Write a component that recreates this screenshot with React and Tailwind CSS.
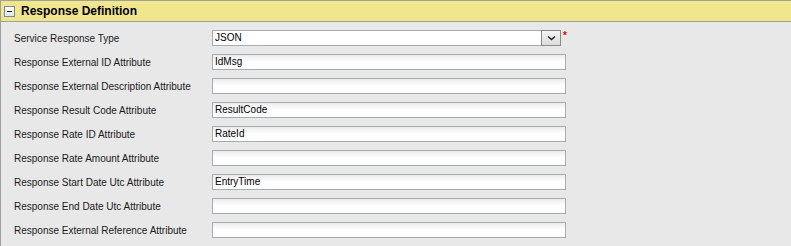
import React from "react";

const fields = [
  { label: "Response External ID Attribute", value: "IdMsg" },
  { label: "Response External Description Attribute", value: "" },
  { label: "Response Result Code Attribute", value: "ResultCode" },
  { label: "Response Rate ID Attribute", value: "RateId" },
  { label: "Response Rate Amount Attribute", value: "" },
  { label: "Response Start Date Utc Attribute", value: "EntryTime" },
  { label: "Response End Date Utc Attribute", value: "" },
  { label: "Response External Reference Attribute", value: "" },
];

const TextBox = ({ value }) => (
  <div className="w-[354px] shrink-0 h-4 border border-[#a5acb2] bg-gradient-to-b from-[#ececec] via-white to-white flex items-center pl-[2px] text-[10px] text-black leading-none">
    {value}
  </div>
);

export default function App() {
  return (
    <div className="w-[791px] h-[246px] bg-[#e8e8e8] border-l border-[#a0a0a0] font-['Liberation_Sans',Arial,sans-serif] overflow-hidden">
      {/* section header */}
      <div className="h-[22px] bg-[#f0e68c] border-t border-b border-[#a0a0a0] flex items-center">
        <div className="ml-[3px] w-[11px] h-[11px] border border-[#7a8a99] bg-gradient-to-b from-white to-[#dfe6ee] flex items-center justify-center">
          <div className="w-[5px] h-px bg-[#1a1a1a]" />
        </div>
        <span className="ml-[6px] text-[12px] font-bold text-black">Response Definition</span>
      </div>

      <div className="pt-1">
        <div className="h-6 flex items-center">
          <span className="w-[211px] shrink-0 pl-[13px] text-[10px] text-[#1a1a1a] whitespace-nowrap">Service Response Type</span>
          <div className="w-[349px] shrink-0 h-4 border border-[#a5acb2] bg-white flex items-center justify-between">
            <span className="pl-[2px] text-[10px] text-black leading-none">JSON</span>
            <div className="w-[20px] h-4 -mr-px border border-[#8a8a8a] bg-gradient-to-b from-[#f4f4f4] to-[#dcdcdc] flex items-center justify-center">
              <svg width="9" height="6" viewBox="0 0 9 6">
                <path d="M1 1.5 L4.5 4.5 L8 1.5" stroke="#222" strokeWidth="1.4" fill="none" />
              </svg>
            </div>
          </div>
          <span className="self-start mt-[5px] ml-[2px] text-[10px] text-red-600 font-bold leading-none">*</span>
        </div>
        {fields.map((f) => (
          <div key={f.label} className="h-6 flex items-center">
            <span className="w-[211px] shrink-0 pl-[13px] text-[10px] text-[#1a1a1a] whitespace-nowrap">{f.label}</span>
            <TextBox value={f.value} />
          </div>
        ))}
      </div>
    </div>
  );
}
